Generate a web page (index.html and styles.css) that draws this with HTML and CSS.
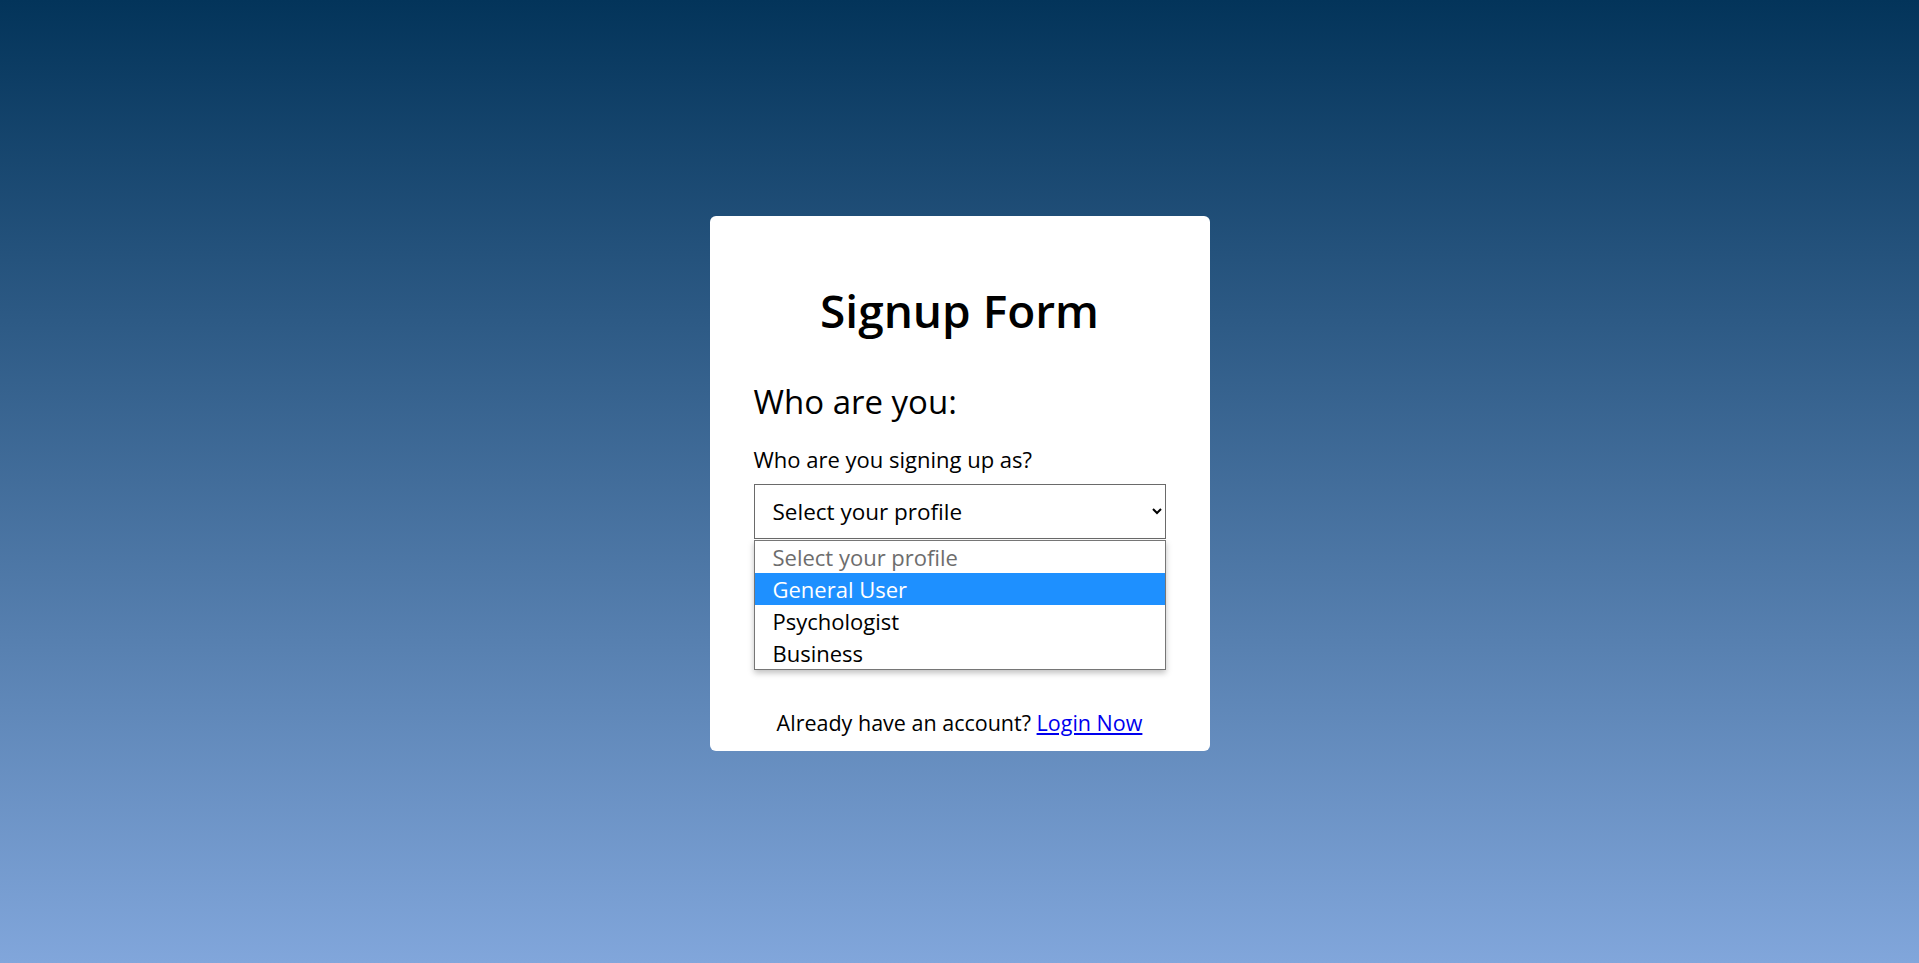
FILE: index.html
```html
<!DOCTYPE html>
<html lang="en">
<head>
<meta charset="utf-8">
<title>Signup Form</title>
<link rel="stylesheet" href="styles.css">
</head>
<body>
<main class="page">
  <form class="card">
    <h1 class="title">Signup Form</h1>
    <h2 class="section">Who are you:</h2>
    <label class="label" for="profile">Who are you signing up as?</label>
    <div class="select-wrap">
      <select id="profile" class="select">
        <option>Select your profile</option>
        <option>General User</option>
        <option>Psychologist</option>
        <option>Business</option>
      </select>
      <ul class="dropdown">
        <li class="opt opt-placeholder">Select your profile</li>
        <li class="opt opt-active">General User</li>
        <li class="opt">Psychologist</li>
        <li class="opt">Business</li>
      </ul>
    </div>
    <div class="spacer"></div>
    <p class="footer">Already have an account? <a class="link" href="#">Login Now</a></p>
  </form>
</main>
</body>
</html>
```
FILE: styles.css
```css
* { box-sizing: border-box; }
html, body { margin: 0; padding: 0; }
body {
  font-family: "Open Sans", "Noto Sans", sans-serif;
  background: linear-gradient(to bottom, #03345a 0%, #81a6db 100%);
  min-height: 100vh;
  color: #000;
}
.page {
  height: 963px;
  padding-top: 4px;
  display: flex;
  align-items: center;
  justify-content: center;
}
.card {
  width: 500px;
  height: 535px;
  background: #fff;
  border-radius: 6px;
  padding: 44px 44px 0;
  display: flex;
  flex-direction: column;
}
.title {
  margin: 22px 0 0;
  font-size: 46px;
  line-height: 56px;
  font-weight: 600;
  text-align: center;
}
.section {
  margin: 44px 0 0;
  font-size: 33px;
  line-height: 40px;
  font-weight: 500;
}
.label {
  margin-top: 23px;
  font-size: 22px;
  line-height: 28px;
}
.select-wrap {
  position: relative;
  margin-top: 11px;
}
.select {
  display: block;
  width: 100%;
  height: 55px;
  font-family: inherit;
  font-size: 22.5px;
  font-weight: 500;
  padding: 0 10px 0 14px;
  border: 1px solid #6a6a6a;
  border-radius: 0;
  background: #fff;
  color: #000;
}
.dropdown {
  position: absolute;
  top: calc(100% + 1px);
  left: 0;
  right: 0;
  margin: 0;
  padding: 0;
  list-style: none;
  background: #fff;
  border: 1px solid #767676;
  box-shadow: 0 3px 6px rgba(0, 0, 0, 0.25);
  z-index: 2;
}
.opt {
  height: 32px;
  line-height: 32px;
  padding-left: 18px;
  font-size: 22px;
}
.opt-placeholder { color: #6d6d6d; }
.opt-active { background: #1e90ff; color: #fff; }
.spacer { flex: 1; }
.footer {
  margin: 0 0 14px;
  font-size: 21.5px;
  line-height: 28px;
  text-align: center;
}
.link { color: #0000ee; }
```
